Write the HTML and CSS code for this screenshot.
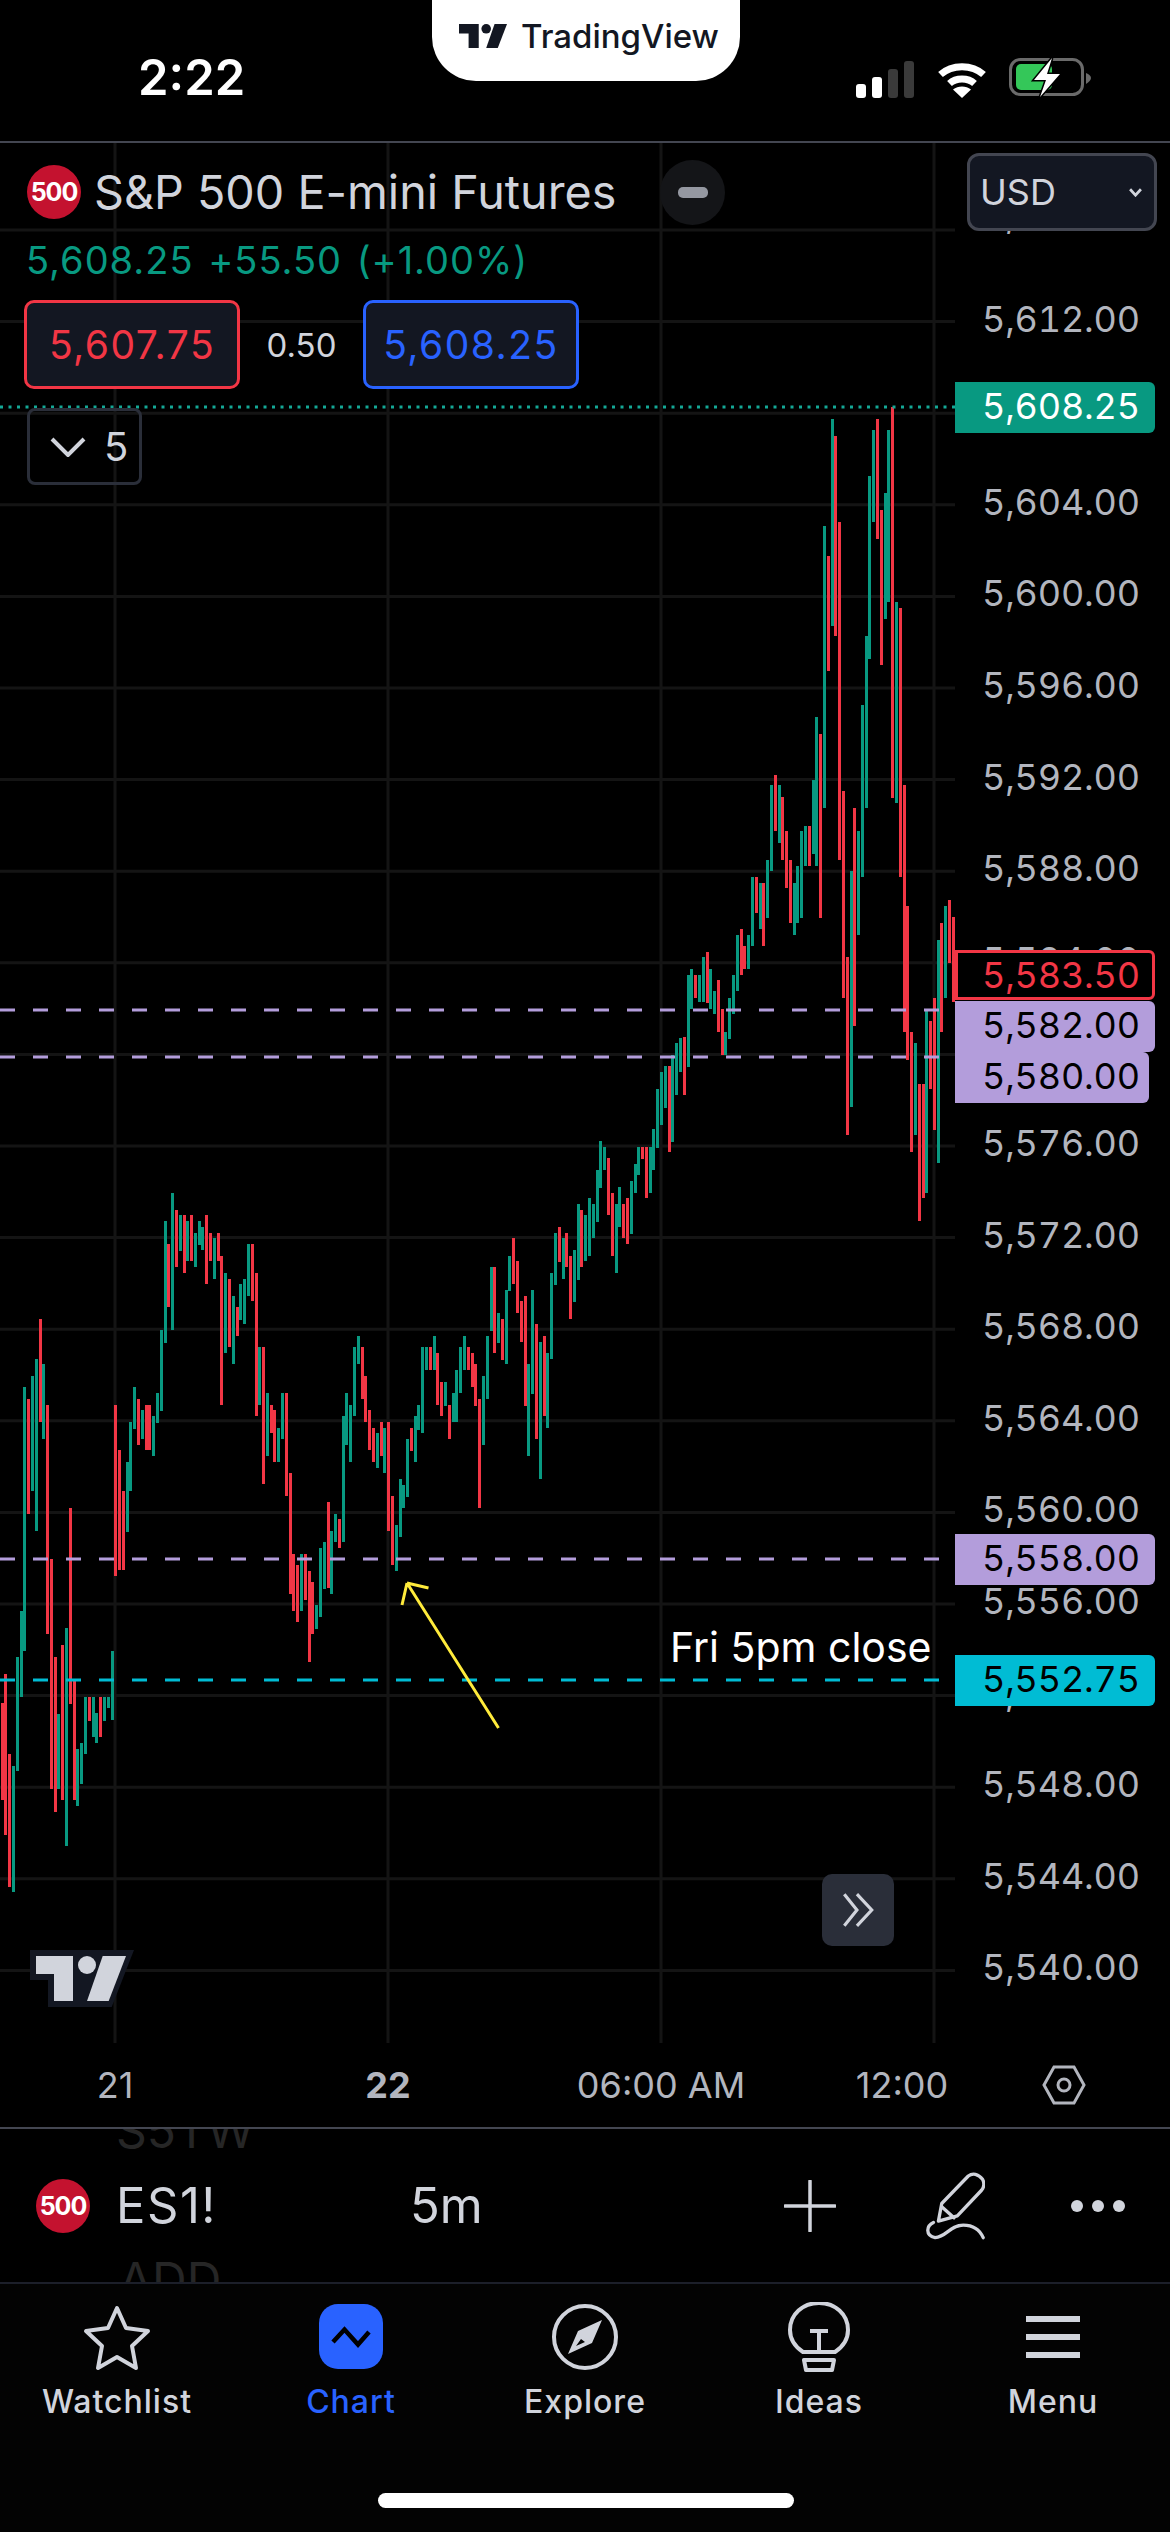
FILE: index.html
```html
<!DOCTYPE html>
<html lang="en">
<head>
  <meta charset="UTF-8" />
  <meta name="viewport" content="width=device-width, initial-scale=1.0"/>
  <title>ES1! | TradingView</title>
  <link rel="stylesheet" href="styles.css">
</head>
<body>

<div class="app">

  <header class="status">
    <span class="clock">2:22</span>
    <div class="island">
      <svg class="island-logo" viewBox="0 0 90 45"><path d="M0 0H37V45H18V18H0Z"/><circle cx="51" cy="9" r="9"/><path d="M51 45H72.7L90 0H66.7Z"/></svg>
      <span>TradingView</span>
    </div>
    <div class="status-icons">
      <div class="signal"><i></i><i></i><i class="off"></i><i class="off"></i></div>
      <svg class="wifi" viewBox="0 0 50 37"><path class="arc" d="M3.5 13.5C15 3 35 3 46.5 13.5"/><path class="arc" d="M12.5 22.5C19 16.5 31 16.5 37.5 22.5"/><path class="dot" d="M25 37L16 28.5C21 24.5 29 24.5 34 28.5Z"/></svg>
      <svg class="battery" viewBox="0 0 83 40">
        <rect class="shell" x="1.5" y="1.5" width="72" height="35" rx="10"/>
        <rect class="charge" x="7" y="6" width="36" height="26" rx="5"/>
        <path class="nub" d="M77 15C80 16 82 18 82 20C82 22 80 24 77 26Z"/>
        <path class="bolt" d="M43 0L25 22H37L31 39L51 16H38Z"/>
      </svg>
    </div>
  </header>

  <section class="chart">

    <div class="plot">
      <svg class="plot-svg" viewBox="0 143 955 1900">
        <path class="grid" d="M115 143V2043M388 143V2043M661 143V2043M934 143V2043M0 230H955M0 321.6H955M0 413.2H955M0 504.8H955M0 596.4H955M0 688H955M0 779.6H955M0 871.2H955M0 962.8H955M0 1054.4H955M0 1146H955M0 1237.6H955M0 1329.2H955M0 1420.8H955M0 1512.4H955M0 1604H955M0 1695.6H955M0 1787.2H955M0 1878.8H955M0 1970.4H955"/>

        <g transform="translate(0 1150) scale(.35714 .49751)">
          <path class="up" d="M38 1238V1491M49 1019V1249M60 927V1100M68 476V1007M90 454V685M102 420V765M122 430V581M164 1134V1285M186 961V1398M217 1204V1318M228 1192V1274M239 1100V1214M262 1100V1180M270 1132V1192M292 1100V1147M303 1100V1122M315 1007V1146M357 627V767M365 547V685M376 476V561M398 523V581M430 535V615M441 488V549M452 362V525M463 143V387M483 86V362M505 131V203M525 143V223M547 167V235M558 143V190M567 155V200M600 177V259M631 247V408M654 293V430M674 269V342M685 259V350M696 189V293M727 396V513M749 488V615M780 559V627M791 488V581M844 812V927M886 915V962M897 800V938M908 788V882M928 765V892M939 731V788M962 535V788M970 488V593M981 513V627M992 396V535M1003 374V430M1057 569V639M1076 559V649M1110 754V846M1121 661V777M1130 673V720M1141 581V697M1163 535V627M1172 513V563M1183 396V569M1194 396V442M1216 374V442M1247 466V515M1270 488V547M1278 442V547M1289 396V488M1300 374V442M1354 454V593M1365 374V501M1376 235V364M1396 328V388"/>
          <path class="down" d="M7 1112V1307M15 1053V1377M26 1214V1481M79 501V731M113 340V547M133 513V972M144 822V1285M155 1019V1331M175 995V1307M197 720V1114M208 1065V1307M250 1100V1148M281 1100V1180M323 513V857M334 603V845M345 685V845M387 501V593M409 513V603M418 513V603M471 189V316M494 121V235M516 131V247M536 131V223M578 131V269M589 167V223M611 167V223M620 213V513M642 259V396M665 316V374M707 189V304M718 247V535M738 396V672M760 513V569M768 523V627M802 488V695M813 649V892M822 812V927M833 834V949M855 812V904M866 846V1030M875 868V972M919 708V880M950 742V800M1015 396V500M1023 454V547M1034 523V603M1046 559V627M1068 547V615M1088 547V765M1099 696V834M1152 559V605M1205 396V442M1225 408V513M1236 466V535M1258 513V581M1312 396V442M1323 408V476M1331 430V515M1342 501V720M1385 235V408"/>
        </g>

        <g transform="translate(500 1000) scale(.33333)">
          <path class="up" d="M19 870V1092M28 768V873M85 1092V1368M97 870V1182M121 1026V1437M142 1059V1284M154 819V1077M166 699V855M190 714V837M223 750V906M235 612V840M256 645V783M268 594V768M280 612V714M292 510V666M301 423V564M313 441V510M349 612V819M358 561V681M394 543V702M406 492V579M415 441V525M451 441V579M460 387V510M472 267V444M484 216V375M496 198V324M517 165V426M529 129V285M541 114V216"/>
          <path class="down" d="M7 957V1080M40 714V852M52 783V939M64 903V1026M76 888V1218M109 972V1317M133 1008V1248M178 681V786M199 699V801M211 768V957M244 630V801M325 474V645M337 579V768M370 612V714M382 594V732M427 441V477M439 441V594M508 198V456"/>
        </g>

        <g transform="translate(650 380) scale(.33333 .54201)">
          <path class="up" d="M115 1098V1267M124 1087V1160M148 1098V1148M160 1065V1148M181 1087V1160M193 1128V1170M226 1203V1245M238 1140V1215M250 1098V1170M262 1024V1128M295 1024V1087M307 917V1044M331 928V1013M352 885V992M364 747V906M388 747V854M433 928V1024M442 897V1002M454 832V992M466 823V897M490 738V875M499 622V897M523 270V790M547 72V454M604 906V1341M625 832V1024M637 600V917M649 473V790M658 177V515M670 92V262M706 208V441M715 92V410M739 410V780M796 1223V1393M829 1165V1500M865 1034V1445M886 970V1140"/>
          <path class="down" d="M103 1213V1319M136 1098V1140M172 1055V1150M205 1107V1203M217 1160V1245M274 1013V1097M283 1044V1087M319 917V983M340 928V1044M376 728V832M397 769V885M409 832V938M421 885V1002M478 823V897M511 653V992M535 325V537M556 103V472M568 262V885M580 758V1140M592 1064V1393M613 790V1192M682 72V293M694 240V526M727 50V771M751 421V917M763 747V1203M772 970V1255M784 1203V1424M808 1298V1551M820 1298V1509M841 1182V1308M853 1140V1383M874 1002V1203M898 959V1075M910 991V1148"/>
        </g>

        <path class="line-last" d="M0 407H955"/>
        <path class="line-level" d="M0 1010H939M0 1057H939M0 1559H939"/>
        <path class="line-close" d="M0 1680H939"/>
        <path class="arrow" d="M498.5 1728L407 1583M407 1583L428.5 1588M407 1583L402 1605"/>

        <g transform="translate(36 1956)">
          <path class="tv-back" d="M-6 -6H98L75.7 51H12V24H-6Z"/>
          <g class="tv-mark"><path d="M0 0H37V45H18V18H0Z"/><circle cx="51" cy="9" r="9"/><path d="M51 45H72.7L90 0H66.7Z"/></g>
        </g>
      </svg>

      <div class="legend">
        <div class="legend-title">
          <span class="badge">500</span>
          <span class="name">S&amp;P 500 E-mini Futures</span>
          <span class="state"><i></i></span>
        </div>
        <div class="legend-price">5,608.25 +55.50 (+1.00%)</div>
        <div class="legend-quote">
          <span class="quote quote-sell">5,607.75</span>
          <span class="spread">0.50</span>
          <span class="quote quote-buy">5,608.25</span>
        </div>
        <div class="collapse">
          <svg viewBox="0 0 36 20"><path d="M2 2L18 18L34 2"/></svg>
          <span>5</span>
        </div>
      </div>

      <div class="note">Fri 5pm close</div>
      <div class="scroll-btn">
        <svg viewBox="0 0 36 36"><path d="M5 3L17 18L5 33M17 3L31 18L17 33"/></svg>
      </div>
    </div>

    <div class="axis">
      <div class="currency">USD <svg viewBox="0 0 12 8"><path d="M1 1L6 6.5L11 1"/></svg></div>
      <div class="axis-labels">
        <span>5,616.00</span><span>5,612.00</span><span>5,608.00</span><span>5,604.00</span><span>5,600.00</span>
        <span>5,596.00</span><span>5,592.00</span><span>5,588.00</span><span>5,584.00</span><span>5,580.00</span>
        <span>5,576.00</span><span>5,572.00</span><span>5,568.00</span><span>5,564.00</span><span>5,560.00</span>
        <span>5,556.00</span><span>5,552.00</span><span>5,548.00</span><span>5,544.00</span><span>5,540.00</span>
      </div>
      <div class="tag tag-last">5,608.25</div>
      <div class="tag tag-bid">5,583.50</div>
      <div class="tag tag-level tag-582">5,582.00</div>
      <div class="tag tag-level tag-580">5,580.00</div>
      <div class="tag tag-level tag-558">5,558.00</div>
      <div class="tag tag-close">5,552.75</div>
    </div>

    <div class="time-axis">
      <span class="t-21">21</span>
      <span class="t-22">22</span>
      <span class="t-06">06:00 AM</span>
      <span class="t-12">12:00</span>
      <svg class="axis-settings" viewBox="0 0 44 40"><path d="M12 2H32L42 20L32 38H12L2 20Z"/><circle cx="22" cy="20" r="6"/></svg>
    </div>

  </section>

  <section class="toolbar">
    <span class="ghost ghost-top">S5TW</span>
    <span class="ghost ghost-bottom">ADD</span>
    <span class="badge">500</span>
    <span class="ticker">ES1!</span>
    <span class="interval">5m</span>
    <div class="tools">
      <svg class="tool-plus" viewBox="0 0 52 52"><path d="M26 1V51M1 26H51"/></svg>
      <svg class="tool-pen" viewBox="675 90 180 205"><path d="M715 238L725 185L805 102C818 92 835 95 848 112C855 125 853 135 845 145L772 222ZM725 195L762 228M700 242C678 252 675 282 705 288C740 285 750 250 790 250C820 250 840 265 850 288"/></svg>
      <svg class="tool-more" viewBox="0 0 54 12"><circle cx="6" cy="6" r="6"/><circle cx="27" cy="6" r="6"/><circle cx="48" cy="6" r="6"/></svg>
    </div>
  </section>

  <nav class="tabs">
    <div class="tab">
      <svg class="tab-icon" viewBox="0 0 70 70"><path class="outline" d="M35 6L44 26L66 29L50 44L54 66L35 55L16 66L20 44L4 29L26 26Z"/></svg>
      <span>Watchlist</span>
    </div>
    <div class="tab tab-active">
      <svg class="tab-icon" viewBox="0 0 70 70"><rect x="3" y="2" width="64" height="65" rx="19"/><path d="M17 40L28.5 27.5L42 42.5L53 30"/></svg>
      <span>Chart</span>
    </div>
    <div class="tab">
      <svg class="tab-icon" viewBox="0 0 70 70"><circle class="outline" cx="35" cy="35" r="31"/><path class="solid" d="M52 18L28 29L18 52L42 41ZM31 37L26 44L35 40Z" fill-rule="evenodd"/></svg>
      <span>Explore</span>
    </div>
    <div class="tab">
      <svg class="tab-icon" viewBox="0 0 70 70"><path class="outline" d="M19 50C10 44 6 36 6 28C6 12 19 1 35 1C51 1 64 12 64 28C64 36 60 44 51 50ZM26 29H44M35 29V50M20 58H50L48 68H22Z"/></svg>
      <span>Ideas</span>
    </div>
    <div class="tab">
      <svg class="tab-icon" viewBox="0 0 70 70"><path class="solid" d="M8 14H62V20H8ZM8 32H62V38H8ZM8 50H62V56H8Z"/></svg>
      <span>Menu</span>
    </div>
    <div class="home-bar"></div>
  </nav>

</div>

</body>
</html>
```

FILE: styles.css
```css
* {
  margin: 0;
  padding: 0;
  box-sizing: border-box;
  font-family: 'Inter', sans-serif;
}

:root {
  --text: #d1d4dc;
  --muted: #b2b5be;
  --up: #089981;
  --down: #f23645;
  --blue: #2962ff;
  --panel: #131722;
  --border: #434651;
  --level: #b39ddb;
  --close: #00bcd4;
}

body {
  background: #000;
  color: var(--text);
}

.app {
  position: relative;
  width: 1170px;
  height: 2532px;
  overflow: hidden;
  background: #000;
}

/* status bar */
.status {
  position: relative;
  display: flex;
  align-items: flex-start;
  justify-content: space-between;
  height: 143px;
  border-bottom: 2px solid var(--border);
  padding: 48px 78px 0 138px;
}

.clock {
  font-size: 49px;
  line-height: 60px;
  font-weight: 600;
  color: #fff;
}

.island {
  position: absolute;
  top: 0;
  left: 432px;
  display: flex;
  align-items: center;
  gap: 14px;
  width: 308px;
  height: 81px;
  padding: 0 0 9px 27px;
  background: #fff;
  border-radius: 0 0 44px 44px;
  color: var(--panel);
  font-size: 33px;
  font-weight: 500;
}

.island-logo {
  width: 48px;
  height: 24px;
  fill: var(--panel);
}

.status-icons {
  display: flex;
  align-items: flex-end;
  margin-top: 10px;
}

.signal {
  display: flex;
  align-items: flex-end;
  gap: 6px;
  height: 37px;
  margin-right: 23px;
}

.signal i {
  width: 10px;
  border-radius: 3px;
  background: #fff;
}

.signal i:nth-child(1) { height: 14px; }
.signal i:nth-child(2) { height: 21px; }
.signal i:nth-child(3) { height: 29px; }
.signal i:nth-child(4) { height: 37px; }
.signal i.off { background: #3a3a3a; }

.wifi {
  width: 50px;
  height: 37px;
  margin-right: 22px;
}

.wifi .arc {
  fill: none;
  stroke: #fff;
  stroke-width: 7;
}

.wifi .dot {
  fill: #fff;
}

.battery {
  width: 83px;
  height: 40px;
}

.battery .shell {
  fill: none;
  stroke: #6a6a6a;
  stroke-width: 3;
}

.battery .charge {
  fill: #34c759;
}

.battery .nub {
  fill: #6a6a6a;
}

.battery .bolt {
  fill: #fff;
  stroke: #000;
  stroke-width: 3;
  paint-order: stroke;
}

/* chart */
.chart {
  display: grid;
  grid-template-columns: 955px 215px;
  grid-template-rows: 1900px 84px;
  height: 1984px;
}

.plot {
  position: relative;
}

.plot-svg {
  display: block;
  width: 955px;
  height: 1900px;
}

.grid {
  fill: none;
  stroke: #141414;
  stroke-width: 3;
}

.up,
.down {
  fill: none;
  stroke-width: 3;
  vector-effect: non-scaling-stroke;
  shape-rendering: crispEdges;
}

.up { stroke: var(--up); }
.down { stroke: var(--down); }

.line-last {
  fill: none;
  stroke: #14a896;
  stroke-width: 3;
  stroke-dasharray: 3 5.5;
}

.line-level,
.line-close {
  fill: none;
  stroke-width: 3;
  stroke-dasharray: 15 18;
}

.line-level { stroke: var(--level); }
.line-close { stroke: var(--close); }

.arrow {
  fill: none;
  stroke: #ffeb3b;
  stroke-width: 3;
}

.tv-back { fill: var(--panel); }
.tv-mark { fill: var(--text); }

/* legend */
.legend {
  position: absolute;
  top: 16px;
  left: 27px;
  display: flex;
  flex-direction: column;
}

.legend-title {
  display: flex;
  align-items: center;
  height: 66px;
}

.badge {
  display: flex;
  align-items: center;
  justify-content: center;
  flex: none;
  width: 54px;
  height: 54px;
  border-radius: 50%;
  background: #c4122f;
  color: #fff;
  font-size: 25px;
  font-weight: 700;
  letter-spacing: -1px;
}

.name {
  margin-left: 13px;
  font-size: 46.7px;
  white-space: nowrap;
}

.state {
  display: flex;
  align-items: center;
  justify-content: center;
  width: 65px;
  height: 65px;
  margin-left: 44px;
  border-radius: 50%;
  background: #141518;
}

.state i {
  width: 30px;
  height: 11px;
  border-radius: 5px;
  background: #9598a1;
}

.legend-price {
  margin: 12px 0 0 -1px;
  font-size: 38px;
  letter-spacing: 1px;
  word-spacing: 3px;
  line-height: 46px;
  color: var(--up);
  white-space: nowrap;
}

.legend-quote {
  display: flex;
  align-items: center;
  margin: 17px 0 0 -3px;
}

.quote {
  width: 216px;
  height: 89px;
  border: 3px solid;
  border-radius: 10px;
  background: var(--panel);
  font-size: 39px;
  letter-spacing: 1.5px;
  line-height: 83px;
  text-align: center;
}

.quote-sell {
  border-color: var(--down);
  color: var(--down);
}

.quote-buy {
  border-color: var(--blue);
  color: var(--blue);
}

.spread {
  width: 123px;
  font-size: 33px;
  text-align: center;
}

.collapse {
  display: flex;
  align-items: center;
  gap: 18px;
  width: 115px;
  height: 77px;
  margin-top: 19px;
  padding-left: 20px;
  border: 3px solid #2a2e39;
  border-radius: 8px;
  font-size: 40px;
}

.collapse svg {
  width: 36px;
  height: 20px;
  fill: none;
  stroke: var(--text);
  stroke-width: 4;
}

.note {
  position: absolute;
  top: 1479px;
  left: 670px;
  font-size: 41px;
  line-height: 50px;
  color: #fff;
  white-space: nowrap;
}

.scroll-btn {
  position: absolute;
  top: 1731px;
  left: 822px;
  display: flex;
  align-items: center;
  justify-content: center;
  width: 72px;
  height: 72px;
  border-radius: 10px;
  background: #2a2e39;
}

.scroll-btn svg {
  width: 38px;
  height: 38px;
  fill: none;
  stroke: var(--text);
  stroke-width: 3;
}

/* price axis */
.axis {
  position: relative;
}

.axis-labels {
  display: flex;
  flex-direction: column;
  padding: 39px 0 0 27px;
  font-size: 36px;
  font-variant-numeric: tabular-nums;
  letter-spacing: -.2px;
}

.axis-labels span {
  height: 91.6px;
  line-height: 91.6px;
  color: var(--muted);
}

/* the top label sits higher, only its comma shows under the currency box */
.axis-labels span:first-child {
  line-height: 66px;
}

.currency {
  position: absolute;
  top: 10px;
  left: 12px;
  z-index: 2;
  display: flex;
  align-items: center;
  justify-content: space-between;
  width: 190px;
  height: 78px;
  padding: 0 12px 0 10px;
  border: 3px solid var(--border);
  border-radius: 12px;
  background: var(--panel);
  font-size: 36px;
}

.currency svg {
  width: 13px;
  height: 9px;
  fill: none;
  stroke: var(--text);
  stroke-width: 2.5;
}

.tag {
  position: absolute;
  left: 0;
  width: 200px;
  height: 51px;
  padding-left: 27px;
  border-radius: 0 6px 6px 0;
  font-size: 36px;
  font-variant-numeric: tabular-nums;
  letter-spacing: -.2px;
  line-height: 48px;
}

.tag-last {
  top: 239px;
  background: var(--up);
  color: #fff;
}

.tag-bid {
  top: 807px;
  height: 50px;
  border: 3px solid var(--down);
  padding-left: 24px;
  line-height: 44px;
  background: #000;
  color: var(--down);
}

.tag-level {
  background: var(--level);
  color: #000;
}

.tag-582 { top: 858px; }
.tag-580 { top: 909px; width: 194px; }
.tag-558 { top: 1391px; }

.tag-close {
  top: 1512px;
  background: var(--close);
  color: #000;
}

/* time axis */
.time-axis {
  grid-column: 1 / 3;
  display: flex;
  align-items: center;
  height: 84px;
  font-size: 36px;
  color: var(--muted);
  text-align: center;
}

.t-21 { width: 230px; }
.t-22 { width: 316px; font-weight: 700; }
.t-06 { width: 230px; }
.t-12 { width: 252px; }

.axis-settings {
  width: 44px;
  height: 40px;
  margin-left: 14px;
  fill: none;
  stroke: var(--muted);
  stroke-width: 3;
}

/* bottom toolbar */
.toolbar {
  position: relative;
  display: flex;
  align-items: center;
  height: 157px;
  padding: 0 45px 0 36px;
  border-top: 2px solid var(--border);
  border-bottom: 2px solid #1c1f2a;
  overflow: hidden;
  font-size: 49px;
}

.ghost {
  position: absolute;
  font-size: 48px;
  line-height: 48px;
  color: #262626;
}

.ghost-top {
  top: -22px;
  left: 116px;
}

.ghost-bottom {
  top: 127px;
  left: 119px;
}

.ticker {
  margin-left: 26px;
  letter-spacing: 1.5px;
}

.interval {
  margin-left: 193px;
}

.tools {
  display: flex;
  align-items: center;
  margin-left: auto;
}

.tool-plus {
  width: 52px;
  height: 52px;
  fill: none;
  stroke: var(--text);
  stroke-width: 3.5;
  stroke-linecap: round;
}

.tool-pen {
  width: 60px;
  height: 68px;
  margin-left: 89px;
  fill: none;
  stroke: var(--text);
  stroke-width: 10;
  stroke-linecap: round;
  stroke-linejoin: round;
}

.tool-more {
  width: 54px;
  height: 12px;
  margin-left: 86px;
  fill: var(--text);
}

/* tab bar */
.tabs {
  position: relative;
  display: grid;
  grid-template-columns: repeat(5, 234px);
  height: 248px;
  background: #030303;
}

.tab {
  display: flex;
  flex-direction: column;
  align-items: center;
  padding-top: 18px;
  font-size: 32px;
  letter-spacing: 1px;
  font-weight: 500;
}

.tab span {
  margin-top: 10px;
  line-height: 40px;
}

.tab-icon {
  width: 70px;
  height: 70px;
}

.tab-icon .outline {
  fill: none;
  stroke: var(--text);
  stroke-width: 4;
  stroke-linejoin: round;
}

.tab-icon .solid {
  fill: var(--text);
}

.tab-active {
  color: var(--blue);
}

.tab-active rect {
  fill: var(--blue);
}

.tab-active path {
  fill: none;
  stroke: #000;
  stroke-width: 4.5;
}

.home-bar {
  position: absolute;
  bottom: 24px;
  left: 378px;
  width: 416px;
  height: 15px;
  border-radius: 8px;
  background: #fff;
}
```
